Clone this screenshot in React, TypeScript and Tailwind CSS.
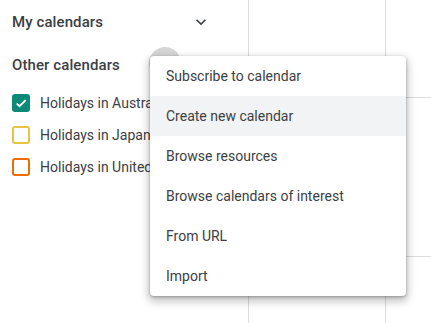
import React from "react";

const font = { fontFamily: "Roboto, 'Liberation Sans', sans-serif" };

function Check({ color, checked }: { color: string; checked?: boolean }) {
  return (
    <div
      className="w-[18px] h-[18px] rounded-[3px] border-2 flex items-center justify-center shrink-0"
      style={{ borderColor: color, backgroundColor: checked ? color : "transparent" }}
    >
      {checked && (
        <svg width="14" height="14" viewBox="0 0 24 24">
          <path d="M4.5 12.5l5 5L20 7" fill="none" stroke="#fff" strokeWidth="3.2" />
        </svg>
      )}
    </div>
  );
}

export default function App() {
  const items = [
    "Subscribe to calendar",
    "Create new calendar",
    "Browse resources",
    "Browse calendars of interest",
    "From URL",
    "Import",
  ];
  return (
    <div className="relative w-[431px] h-[323px] overflow-hidden bg-white flex text-[#3c4043]" style={font}>
      <div className="w-[249px] h-full border-r border-[#dadce0] shrink-0">
        <div className="h-[44px] flex items-center justify-between pl-3 pr-[37px]">
          <span className="text-[15px] font-medium tracking-[0.1px]">My calendars</span>
          <svg width="20" height="20" viewBox="0 0 24 24">
            <path d="M16.59 8.59L12 13.17 7.41 8.59 6 10l6 6 6-6z" fill="#3c4043" />
          </svg>
        </div>
        <div className="h-[43px] flex items-center pl-3">
          <span className="text-[15px] font-medium tracking-[0.1px]">Other calendars</span>
        </div>
        {[
          ["#0b8a78", "Holidays in Australia", true],
          ["#e4c441", "Holidays in Japan", false],
          ["#ef6c00", "Holidays in United Kingdom", false],
        ].map(([c, t, ch]) => (
          <div key={t as string} className="h-[32px] flex items-center pl-3 gap-[10px]">
            <Check color={c as string} checked={ch as boolean} />
            <span className="text-[14px] whitespace-nowrap">{t as string}</span>
          </div>
        ))}
      </div>
      <div className="flex-1 grid grid-cols-[137px_1fr] grid-rows-[98px_159px_1fr]">
        {Array.from({ length: 6 }).map((_, i) => (
          <div
            key={i}
            className={`border-[#dadce0] ${i % 2 === 0 ? "border-r" : ""} ${i < 4 ? "border-b" : ""}`}
          />
        ))}
      </div>
      <div className="absolute left-[149px] top-[47px] w-[32px] h-[32px] rounded-full bg-[#d6d6d6]" />
      <div className="absolute left-[150px] top-[56px] w-[256px] bg-white rounded-[4px] shadow-[0_4px_8px_2px_rgba(0,0,0,0.22),0_1px_3px_rgba(0,0,0,0.3)]">
        {items.map((t, i) => (
          <div
            key={t}
            className={`h-[40px] flex items-center pl-4 text-[14px] ${i === 1 ? "bg-[#f1f3f4]" : ""}`}
          >
            {t}
          </div>
        ))}
      </div>
    </div>
  );
}
